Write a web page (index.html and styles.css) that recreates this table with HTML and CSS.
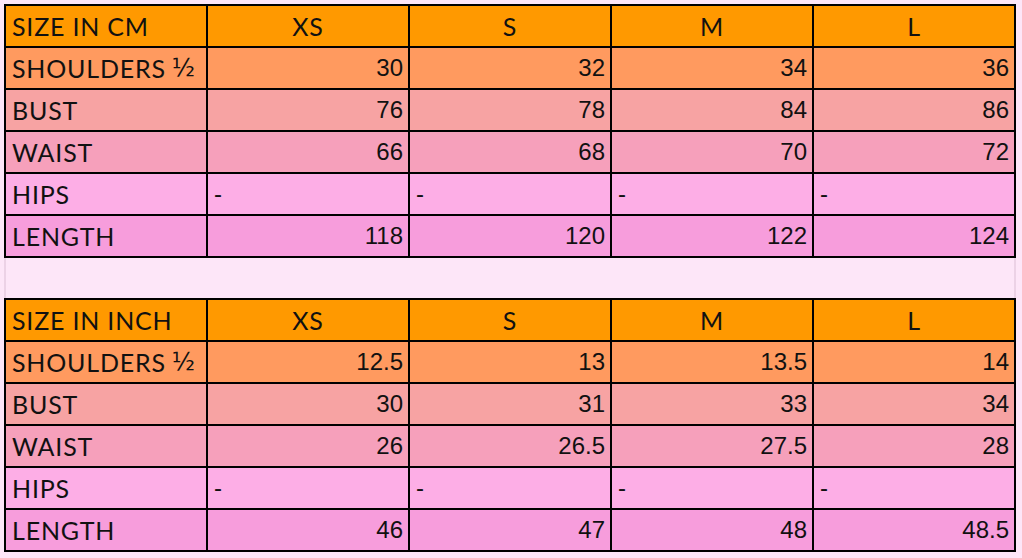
FILE: index.html
```html
<!DOCTYPE html>
<html>
<head>
<meta charset="utf-8">
<link rel="stylesheet" href="styles.css">
</head>
<body>
<div class="page">
  <div class="grid">
    <div class="c hd lab">SIZE IN CM</div><div class="c hd ctr">XS</div><div class="c hd ctr">S</div><div class="c hd ctr">M</div><div class="c hd ctr">L</div>
    <div class="c sh lab">SHOULDERS <span class="half">½</span></div><div class="c sh num">30</div><div class="c sh num">32</div><div class="c sh num">34</div><div class="c sh num">36</div>
    <div class="c bu lab">BUST</div><div class="c bu num">76</div><div class="c bu num">78</div><div class="c bu num">84</div><div class="c bu num">86</div>
    <div class="c wa lab">WAIST</div><div class="c wa num">66</div><div class="c wa num">68</div><div class="c wa num">70</div><div class="c wa num">72</div>
    <div class="c hi lab">HIPS</div><div class="c hi dash">-</div><div class="c hi dash">-</div><div class="c hi dash">-</div><div class="c hi dash">-</div>
    <div class="c le lab">LENGTH</div><div class="c le num">118</div><div class="c le num">120</div><div class="c le num">122</div><div class="c le num">124</div>
  </div>
  <div class="spacer"></div>
  <div class="grid">
    <div class="c hd lab">SIZE IN INCH</div><div class="c hd ctr">XS</div><div class="c hd ctr">S</div><div class="c hd ctr">M</div><div class="c hd ctr">L</div>
    <div class="c sh lab">SHOULDERS <span class="half">½</span></div><div class="c sh num">12.5</div><div class="c sh num">13</div><div class="c sh num">13.5</div><div class="c sh num">14</div>
    <div class="c bu lab">BUST</div><div class="c bu num">30</div><div class="c bu num">31</div><div class="c bu num">33</div><div class="c bu num">34</div>
    <div class="c wa lab">WAIST</div><div class="c wa num">26</div><div class="c wa num">26.5</div><div class="c wa num">27.5</div><div class="c wa num">28</div>
    <div class="c hi lab">HIPS</div><div class="c hi dash">-</div><div class="c hi dash">-</div><div class="c hi dash">-</div><div class="c hi dash">-</div>
    <div class="c le lab">LENGTH</div><div class="c le num">46</div><div class="c le num">47</div><div class="c le num">48</div><div class="c le num">48.5</div>
  </div>
</div>
</body>
</html>
```
FILE: styles.css
```css
html, body {
  margin: 0;
  padding: 0;
  background: #fde6f8;
}
.page {
  padding: 4px 0 0 4px;
  width: 1012px;
}
.grid {
  display: grid;
  grid-template-columns: repeat(5, 200px);
  grid-auto-rows: 40px;
  gap: 2px;
  padding: 2px;
  background: #000;
  width: 1008px;
}
.spacer {
  height: 40px;
  border-left: 2px solid #ecd2e6;
  border-right: 2px solid #ecd2e6;
  box-sizing: border-box;
}
.c {
  display: flex;
  align-items: center;
  font-size: 24px;
  line-height: 28px;
  color: #111;
  padding: 0 6px;
  white-space: nowrap;
}
.lab, .ctr {
  font-family: "Lato", "Noto Sans", sans-serif;
  font-size: 25px;
  letter-spacing: 0.8px;
  padding-top: 0;
}
.half {
  font-family: "DejaVu Sans", sans-serif;
  font-size: 24px;
  margin-left: 6px;
}
.ctr { justify-content: center; }
.num {
  font-family: "Liberation Sans", Arial, sans-serif;
  justify-content: flex-end;
  padding-right: 5px;
}
.dash {
  font-family: "Liberation Sans", Arial, sans-serif;
}
.hd { background: #ff9900; }
.sh { background: #ff9a5f; }
.bu { background: #f7a3a3; }
.wa { background: #f6a0bb; }
.hi { background: #fdaee6; }
.le { background: #f79ddc; }
```
